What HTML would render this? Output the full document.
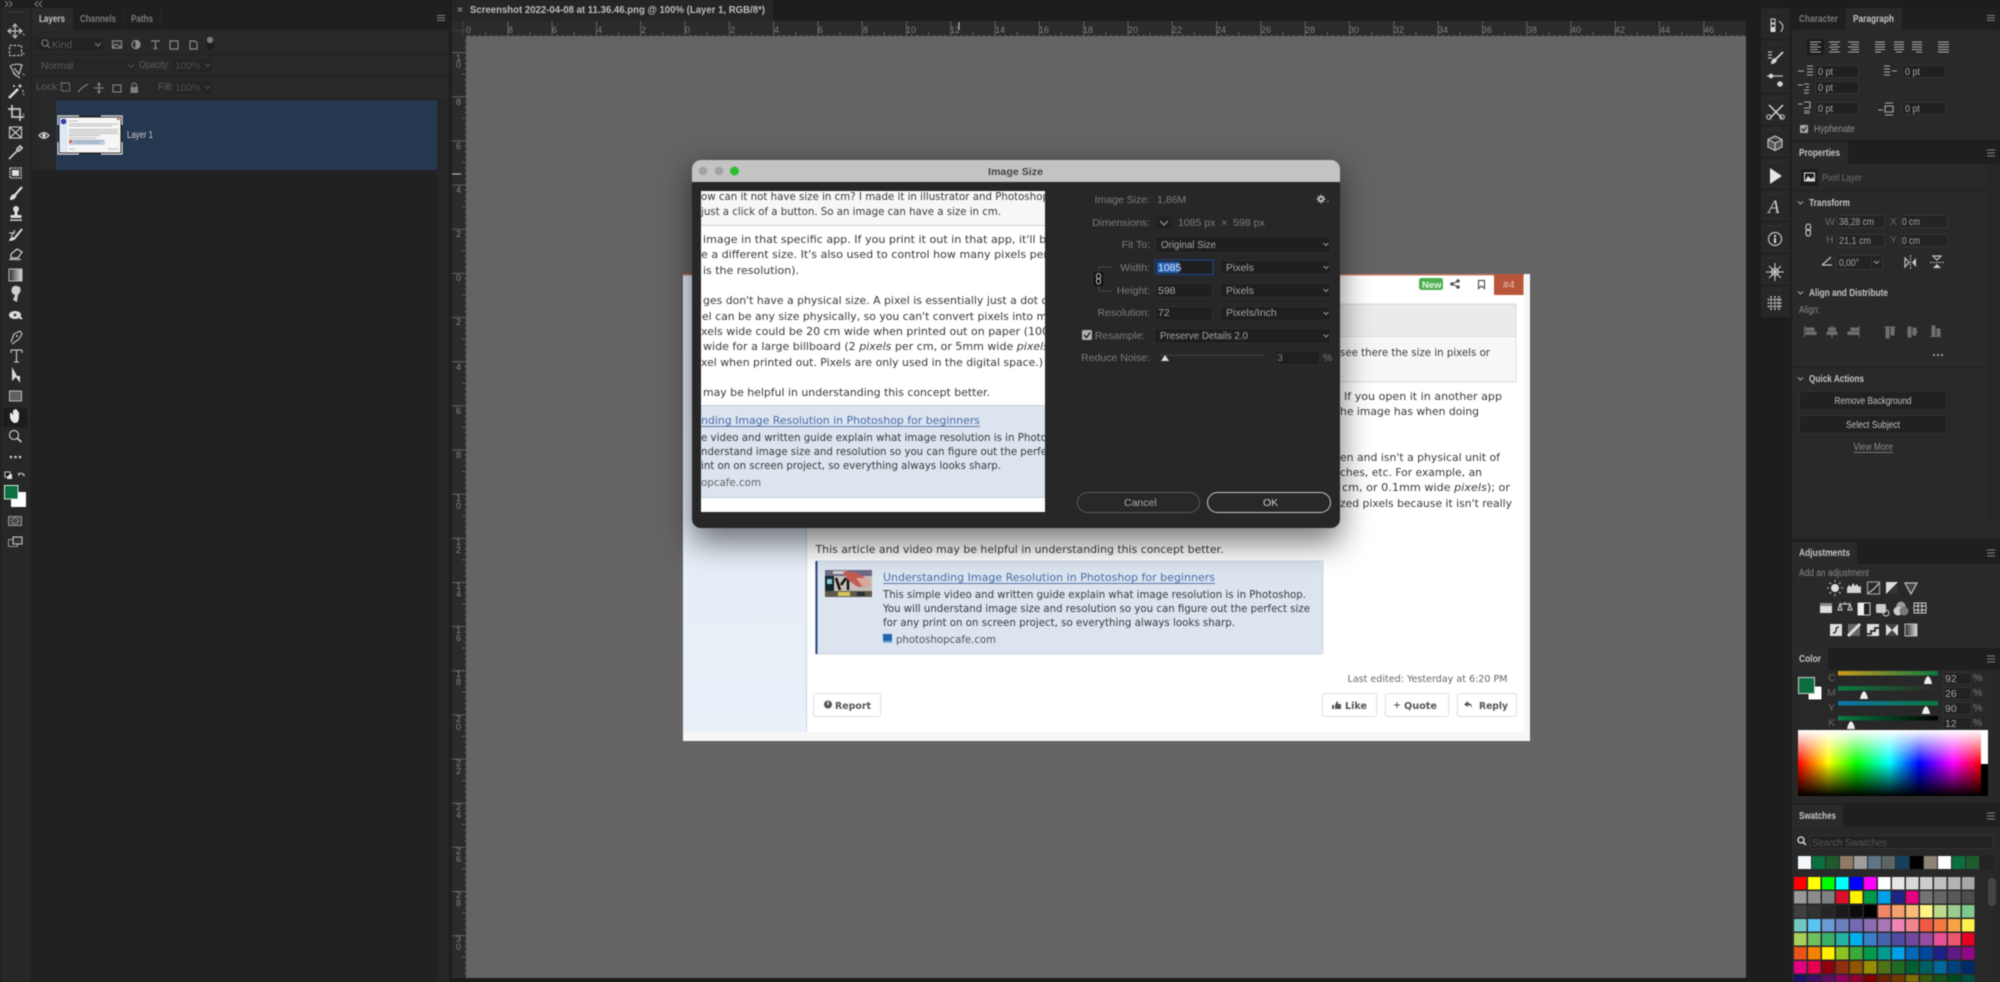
<!DOCTYPE html>
<html><head><meta charset="utf-8"><title>Image Size</title>
<style>
html,body{margin:0;padding:0;background:#1e1e1e;width:2000px;height:982px;overflow:hidden}
svg{display:block;filter:blur(.45px)}
text{font-family:"Liberation Sans",sans-serif;font-size:10px;fill:#9a9a9a;white-space:pre}
.b{font-weight:bold;fill:#c4c4c4}
.t{font-weight:bold;fill:#7a7a7a}
.dim{fill:#5c5c5c}
.v{fill:#a4a4a4;font-size:10.5px}
.l{fill:#7c7c7c;font-size:10.5px}
.d{font-family:"DejaVu Sans",sans-serif;font-size:11px;fill:#3a3a3a}
.dq{font-family:"DejaVu Sans",sans-serif;font-size:10.5px;fill:#3a3a3a}
.r{fill:#808080;font-size:9px;font-family:"Liberation Sans",sans-serif}
.i{fill:none;stroke:#c0c0c0;stroke-width:1.2}
.a{fill:none;stroke:#777;stroke-width:1.2}
</style></head><body>
<svg width="2000" height="982" viewBox="0 0 2000 982" xmlns="http://www.w3.org/2000/svg">
<defs>
<pattern id="hr" x="463" y="21" width="44.3" height="15" patternUnits="userSpaceOnUse"><path d="M.5 0V15M22.6 11V15M5.5 13.500V15M11 13.500V15M16.6 13.500V15M28 13.500V15M33.5 13.500V15M39 13.500V15" stroke="#626262" stroke-width="1" fill="none"/></pattern>
<pattern id="vr" x="452" y="8" width="14" height="44.15" patternUnits="userSpaceOnUse"><path d="M0 .5H14M10 22H14M12.500 5.5H14M12.500 11H14M12.500 16.5H14M12.500 27.5H14M12.500 33H14M12.500 38.5H14" stroke="#626262" stroke-width="1" fill="none"/></pattern>
<linearGradient id="rb"><stop offset="0" stop-color="#f00"/><stop offset=".165" stop-color="#ff0"/><stop offset=".32" stop-color="#0f0"/><stop offset=".5" stop-color="#0ff"/><stop offset=".665" stop-color="#00f"/><stop offset=".85" stop-color="#f0f"/><stop offset="1" stop-color="#f00"/></linearGradient>
<linearGradient id="wb" x2="0" y2="1"><stop offset="0" stop-color="#fff"/><stop offset=".5" stop-color="#fff" stop-opacity="0"/><stop offset=".5" stop-color="#000" stop-opacity="0"/><stop offset="1" stop-color="#000"/></linearGradient>
<linearGradient id="sc"><stop offset="0" stop-color="#cc9a1e"/><stop offset="1" stop-color="#0a7a40"/></linearGradient>
<linearGradient id="sm"><stop offset="0" stop-color="#0a7d40"/><stop offset="1" stop-color="#2e2626"/></linearGradient>
<linearGradient id="sy"><stop offset="0" stop-color="#0c74b0"/><stop offset="1" stop-color="#0b7a3c"/></linearGradient>
<linearGradient id="sk"><stop offset="0" stop-color="#0a7d40"/><stop offset="1" stop-color="#000"/></linearGradient>
<linearGradient id="gr"><stop offset="0" stop-color="#2a2a2a"/><stop offset="1" stop-color="#ddd"/></linearGradient>
<linearGradient id="side" x2="0" y2="1"><stop offset="0" stop-color="#e2ebf6"/><stop offset="1" stop-color="#e9f0f8"/></linearGradient>
<filter id="sh" x="-20%" y="-20%" width="140%" height="150%"><feGaussianBlur stdDeviation="16"/></filter>
<clipPath id="pv"><rect x="701" y="191" width="344" height="321"/></clipPath>
<clipPath id="dlg"><rect x="692" y="160" width="648" height="368" rx="9"/></clipPath>
</defs>

<rect width="2000" height="982" fill="#1e1e1e"/>
<!-- left toolbar -->
<rect x="1" y="8" width="30" height="974" fill="#272727"/>
<path d="M5 1L8 4L5 7M9 1L12 4L9 7M42 1L39 4L42 7M38 1L35 4L38 7M1785 1L1782 4L1785 7M1781 1L1778 4L1781 7M1988 1L1991 4L1988 7M1992 1L1995 4L1992 7" class="a"/>
<path d="M8 12H24" stroke="#4a4a4a" stroke-dasharray="1 1"/>

<!-- layers panel -->
<rect x="32" y="8" width="417" height="22" fill="#1f1f1f"/>
<rect x="32" y="8" width="41" height="22" fill="#2a2a2a"/>
<path d="M123.500 8V30M160.500 8V30" stroke="#262626"/>
<text x="39" y="22" class="b" textLength="26" lengthAdjust="spacingAndGlyphs">Layers</text>
<text x="80" y="22" class="t" textLength="36" lengthAdjust="spacingAndGlyphs">Channels</text>
<text x="131" y="22" class="t" textLength="22" lengthAdjust="spacingAndGlyphs">Paths</text>
<path d="M437 15.500H445M437 18H445M437 20.500H445" stroke="#808080"/>
<rect x="32" y="30" width="417" height="69" fill="#282828"/>
<path d="M32 54.500H449M32 76.500H449" stroke="#222"/>
<rect x="35" y="38" width="68" height="12" fill="#222"/>
<circle cx="45" cy="43" r="3.200" class="a"/><path d="M47.500 45.500L50 48" class="a"/>
<text x="52" y="48" class="dim" style="font-size:10px">Kind</text>
<path d="M95 43L98 46L101 43" class="a"/>
<g stroke="#8b8b8b" fill="none" stroke-width="1.200">
<rect x="112.500" y="41" width="9" height="7"/><path d="M113 47L116 44L121 47"/>
<circle cx="136" cy="44.500" r="4"/><path d="M136 40.500A4 4 0 0 1 136 48.500Z" fill="#8b8b8b"/>
<path d="M151 41H160M155.500 41V48.500M153.500 48.500H157.500"/>
<rect x="170" y="41" width="8" height="8"/>
<path d="M190 41H195L197 43V49H190Z"/>
</g>
<rect x="206" y="38" width="8" height="12" rx="4" fill="#1d1d1d"/><circle cx="210" cy="40" r="3.200" fill="#7a7a7a"/>
<rect x="35" y="59" width="101" height="13" fill="#262626"/>
<text x="41" y="69" class="dim">Normal</text>
<path d="M128 64.500L131 67.500L134 64.500" stroke="#555" fill="none"/>
<text x="139" y="68" class="dim" textLength="31" lengthAdjust="spacingAndGlyphs">Opacity:</text>
<rect x="173" y="59" width="39" height="13" fill="#242424"/><text x="175" y="69" style="fill:#4c4c4c">100%</text>
<path d="M205 64L207.500 66.500L210 64" stroke="#555" fill="none"/>
<text x="36" y="90" class="dim">Lock:</text>
<g stroke="#7f7f7f" fill="none" stroke-width="1.200">
<rect x="61.500" y="83" width="8" height="8" stroke-dasharray="2 1"/>
<path d="M78 92L83 87L88 84"/>
<path d="M99 83V93M94 88H104M97.500 85L99 83L100.500 85M97.500 91L99 93L100.500 91"/>
<rect x="113" y="85" width="8" height="7"/>
</g>
<rect x="130.500" y="87" width="7.500" height="6" fill="#7f7f7f"/><path d="M132 87V85A2.300 2.300 0 0 1 136.500 85V87" stroke="#7f7f7f" fill="none"/>
<text x="158" y="90" class="dim">Fill:</text>
<rect x="173" y="81" width="39" height="13" fill="#242424"/><text x="175" y="91" style="fill:#4c4c4c">100%</text>
<path d="M205 86L207.500 88.500L210 86" stroke="#555" fill="none"/>
<rect x="32" y="99" width="24" height="71" fill="#282828"/>
<rect x="56" y="100" width="381" height="70" fill="#25384f"/>
<rect x="32" y="170" width="405" height="812" fill="#212121"/>
<rect x="437" y="99" width="12" height="883" fill="#262626"/>
<path d="M39 135.500Q44 130 49 135.500Q44 141 39 135.500Z" fill="none" stroke="#ddd" stroke-width="1.200"/><circle cx="44" cy="135.500" r="1.800" fill="#ddd"/>
<rect x="58" y="116" width="64" height="38" fill="#1f1f1f"/>
<rect x="59.500" y="117.500" width="61" height="35" fill="#f6f6f6"/>
<rect x="59.500" y="117.500" width="8" height="35" fill="#dfe8f3"/><circle cx="63.500" cy="121.500" r="2.800" fill="#2e3fa8"/>
<path d="M69 121H78M69 124H118M69 126H112M69 129.500H118M69 131.500H118M69 133.500H118M69 135.500H100M69 138H96" stroke="#a8a8a8" stroke-width=".8"/>
<rect x="69" y="139.500" width="36" height="5.500" fill="#c3d2e4"/><rect x="69" y="140" width="3" height="3" fill="#d9654b"/><path d="M73 141H103M73 143H100" stroke="#8797ac" stroke-width=".7"/>
<rect x="117" y="118" width="2.500" height="2" fill="#c9583a"/>
<path d="M69 149H75M108 149H118" stroke="#aaa" stroke-width=".8"/>
<path d="M58 125V116H79M101 116H122V125M122 142V154H101M79 154H58V142" fill="none" stroke="#e8e8e8" stroke-width="1.200"/>
<text x="127" y="138" style="fill:#cccccc;font-size:10px" textLength="26" lengthAdjust="spacingAndGlyphs">Layer 1</text>

<!-- doc tab strip + rulers -->
<rect x="450" y="0" width="1296" height="21" fill="#1c1c1c"/>
<rect x="452" y="0" width="321" height="21" fill="#262626"/>
<path d="M458 7.500L462 11.500M462 7.500L458 11.500" stroke="#888" stroke-width="1.200"/>
<text x="470" y="13" textLength="295" lengthAdjust="spacingAndGlyphs" style="font-weight:bold;fill:#bdbdbd;font-size:10px">Screenshot 2022-04-08 at 11.36.46.png @ 100% (Layer 1, RGB/8*)</text>
<rect x="452" y="21" width="1294" height="15" fill="#2b2b2b"/>
<rect x="466" y="21" width="1280" height="15" fill="url(#hr)"/>
<rect x="452" y="36" width="14" height="942" fill="#2b2b2b"/>
<rect x="452" y="36" width="14" height="942" fill="url(#vr)"/>
<path d="M452 30.500H466M463 21V36" stroke="#555" stroke-dasharray="1 1"/>
<g>
<text x="466" y="33" class="r">0</text><text x="508" y="33" class="r">8</text><text x="552" y="33" class="r">6</text><text x="597" y="33" class="r">4</text><text x="641" y="33" class="r">2</text><text x="685" y="33" class="r">0</text><text x="730" y="33" class="r">2</text><text x="774" y="33" class="r">4</text><text x="818" y="33" class="r">6</text><text x="863" y="33" class="r">8</text><text x="906" y="33" class="r">10</text><text x="950" y="33" class="r">12</text><text x="995" y="33" class="r">14</text><text x="1039" y="33" class="r">16</text><text x="1083" y="33" class="r">18</text><text x="1128" y="33" class="r">20</text><text x="1172" y="33" class="r">22</text><text x="1216" y="33" class="r">24</text><text x="1261" y="33" class="r">26</text><text x="1305" y="33" class="r">28</text><text x="1349" y="33" class="r">30</text><text x="1394" y="33" class="r">32</text><text x="1438" y="33" class="r">34</text><text x="1482" y="33" class="r">36</text><text x="1527" y="33" class="r">38</text><text x="1571" y="33" class="r">40</text><text x="1615" y="33" class="r">42</text><text x="1660" y="33" class="r">44</text><text x="1704" y="33" class="r">46</text>
<text x="456" y="61" class="r">1</text><text x="456" y="68" class="r">0</text>
<text x="456" y="105" class="r">8</text><text x="456" y="149" class="r">6</text><text x="456" y="193" class="r">4</text><text x="456" y="237" class="r">2</text><text x="456" y="281" class="r">0</text><text x="456" y="325" class="r">2</text><text x="456" y="370" class="r">4</text><text x="456" y="414" class="r">6</text><text x="456" y="458" class="r">8</text>
<text x="456" y="501" class="r">1</text><text x="456" y="509" class="r">0</text><text x="456" y="545" class="r">1</text><text x="456" y="553" class="r">2</text><text x="456" y="589" class="r">1</text><text x="456" y="597" class="r">4</text><text x="456" y="633" class="r">1</text><text x="456" y="641" class="r">6</text><text x="456" y="677" class="r">1</text><text x="456" y="685" class="r">8</text><text x="456" y="722" class="r">2</text><text x="456" y="730" class="r">0</text><text x="456" y="766" class="r">2</text><text x="456" y="774" class="r">2</text><text x="456" y="810" class="r">2</text><text x="456" y="818" class="r">4</text><text x="456" y="854" class="r">2</text><text x="456" y="862" class="r">6</text><text x="456" y="898" class="r">2</text><text x="456" y="906" class="r">8</text><text x="456" y="942" class="r">3</text><text x="456" y="950" class="r">0</text>
</g>
<path d="M959 22V30M452 174H461" stroke="#ccc" stroke-width="1"/>

<!-- canvas -->
<rect x="466" y="36" width="1280" height="942" fill="#646464"/>
<rect x="450" y="978" width="1296" height="4" fill="#1a1a1a"/>

<!-- document page -->
<rect x="683" y="274" width="847" height="467" fill="#f6f6f6"/>
<rect x="684" y="275" width="840" height="457" fill="#fff"/>
<rect x="684" y="275" width="122" height="457" fill="url(#side)"/>
<rect x="806" y="275" width="1" height="457" fill="#c5d6e9"/>
<rect x="683" y="274" width="841" height="1.500" fill="#cf7a5c"/>
<rect x="1419" y="278" width="24" height="12" rx="2.500" fill="#4caf50"/>
<text x="1422" y="288" style="fill:#e9f6e9;font-size:9.5px;font-weight:bold">New</text>
<g fill="#555" stroke="#555"><circle cx="1452" cy="284" r="1.300"/><circle cx="1458" cy="281" r="1.300"/><circle cx="1458" cy="287" r="1.300"/><path d="M1458 281L1452 284L1458 287" fill="none"/></g>
<path d="M1478.500 280.500H1484.500V288.500L1481.500 286L1478.500 288.500Z" fill="none" stroke="#555" stroke-width="1.200"/>
<rect x="1494" y="274" width="29.500" height="21" fill="#b9563a"/>
<text x="1503" y="288" style="fill:#e8c0b2;font-size:10.5px;font-weight:normal">#4</text>
<rect x="815" y="304" width="701" height="78" fill="#f7f7f7" stroke="#dedede"/>
<rect x="815" y="304.500" width="701" height="32" fill="#ebebeb" stroke="#dcdcdc"/>
<text x="1340" y="356" class="dq" textLength="150" lengthAdjust="spacingAndGlyphs">see there the size in pixels or</text>
<text x="1344" y="400" class="d" textLength="158" lengthAdjust="spacingAndGlyphs">If you open it in another app</text>
<text x="1340" y="415" class="d" textLength="139" lengthAdjust="spacingAndGlyphs">he image has when doing</text>
<text x="1340" y="461" class="d" textLength="160" lengthAdjust="spacingAndGlyphs">en and isn't a physical unit of</text>
<text x="1340" y="476" class="d" textLength="142" lengthAdjust="spacingAndGlyphs">ches, etc. For example, an</text>
<text x="1342" y="491" class="d" textLength="168" lengthAdjust="spacingAndGlyphs">cm, or 0.1mm wide <tspan font-style="italic">pixels</tspan>); or</text>
<text x="1340" y="507" class="d" textLength="172" lengthAdjust="spacingAndGlyphs">zed pixels because it isn't really</text>
<text x="815.500" y="553" class="d" textLength="408" lengthAdjust="spacingAndGlyphs">This article and video may be helpful in understanding this concept better.</text>
<rect x="815.500" y="561" width="507.500" height="93" rx="1.500" fill="#dbe4ef" stroke="#cfd9e6"/>
<rect x="815.500" y="561" width="2" height="93" fill="#2a4a86"/>
<!-- embed thumbnail -->
<rect x="825" y="570" width="47" height="27" fill="#c4bdb6"/>
<rect x="825" y="570" width="47" height="6" fill="#6f6a86"/><rect x="833" y="571" width="14" height="3" fill="#d8d2cc"/>
<rect x="825" y="576" width="9" height="15" fill="#0f2a33"/><rect x="827" y="579" width="5" height="5" fill="#8fc6d8"/>
<path d="M836 578L840 590M846 578L841 585M848 578V590" stroke="#111" stroke-width="2.500" fill="none"/>
<path d="M843 572Q853 570 864 577L868 586L858 587L848 580Z" fill="#c45a54"/><path d="M856 578L869 578L872 586L862 586Z" fill="#d9a89c"/>
<rect x="825" y="591" width="47" height="6" fill="#5e5b4c"/><rect x="838" y="592" width="12" height="4" fill="#d9c65c"/><rect x="857" y="592" width="8" height="4" fill="#2c2c30"/>
<text x="883" y="581" class="d" style="fill:#4a6ca8" textLength="332" lengthAdjust="spacingAndGlyphs">Understanding Image Resolution in Photoshop for beginners</text>
<rect x="883" y="583" width="332" height=".9" fill="#4a6ca8"/>
<text x="883" y="598" class="dq" textLength="423" lengthAdjust="spacingAndGlyphs">This simple video and written guide explain what image resolution is in Photoshop.</text>
<text x="883" y="612" class="dq" textLength="427" lengthAdjust="spacingAndGlyphs">You will understand image size and resolution so you can figure out the perfect size</text>
<text x="883" y="626" class="dq" textLength="352" lengthAdjust="spacingAndGlyphs">for any print on on screen project, so everything always looks sharp.</text>
<rect x="883" y="634" width="9" height="9" fill="#2266b0"/><rect x="883" y="641" width="9" height="2" fill="#7fb0dc"/>
<text x="896" y="643" class="dq" style="fill:#555" textLength="100" lengthAdjust="spacingAndGlyphs">photoshopcafe.com</text>
<text x="1347.500" y="682" class="dq" style="fill:#666;font-size:10px" textLength="160" lengthAdjust="spacingAndGlyphs">Last edited: Yesterday at 6:20 PM</text>
<g fill="#fff" stroke="#d7e0ec"><rect x="813.500" y="693.500" width="67" height="23" rx="2"/><rect x="1322.500" y="693.500" width="54" height="23" rx="2"/><rect x="1385.500" y="693.500" width="63" height="23" rx="2"/><rect x="1457.500" y="693.500" width="59" height="23" rx="2"/></g>
<circle cx="828" cy="704.500" r="4" fill="#555"/><rect x="827.400" y="701.500" width="1.200" height="3.500" fill="#fff"/>
<text x="835" y="709" style="font-size:10px;font-weight:bold;fill:#555;font-family:'DejaVu Sans',sans-serif" textLength="36" lengthAdjust="spacingAndGlyphs">Report</text>
<path d="M1332 705H1334V709H1332ZM1335 705L1337 701L1338 702V704H1341V709H1335Z" fill="#555"/>
<text x="1345" y="709" style="font-size:10px;font-weight:bold;fill:#555;font-family:'DejaVu Sans',sans-serif" textLength="22" lengthAdjust="spacingAndGlyphs">Like</text>
<path d="M1397 702V708M1394 705H1400" stroke="#555"/>
<text x="1404" y="709" style="font-size:10px;font-weight:bold;fill:#555;font-family:'DejaVu Sans',sans-serif" textLength="33" lengthAdjust="spacingAndGlyphs">Quote</text>
<path d="M1468 701L1464 704.500L1468 707V705Q1471 705 1472 708Q1472 703 1468 703Z" fill="#555"/>
<text x="1479" y="709" style="font-size:10px;font-weight:bold;fill:#555;font-family:'DejaVu Sans',sans-serif" textLength="29" lengthAdjust="spacingAndGlyphs">Reply</text>

<!-- dialog shadow -->
<rect x="692" y="170" width="648" height="372" fill="#000" opacity=".55" filter="url(#sh)"/>
<!-- dialog -->
<g clip-path="url(#dlg)">
<rect x="692" y="160" width="648" height="368" fill="#272727"/>
<rect x="692" y="160" width="648" height="22" fill="#c3c3c3"/>
</g>
<circle cx="703" cy="171" r="4.300" fill="#a2a2a2"/><circle cx="719" cy="171" r="4.300" fill="#a2a2a2"/><circle cx="734.500" cy="171" r="4.500" fill="#2ac032"/>
<text x="988" y="175" style="font-weight:bold;fill:#444;font-size:10.5px" textLength="55" lengthAdjust="spacingAndGlyphs">Image Size</text>

<!-- preview -->
<rect x="701" y="191" width="344" height="321" fill="#fff"/>
<g clip-path="url(#pv)">
<rect x="701" y="191" width="344" height="34" fill="#f7f7f7"/><rect x="701" y="225" width="344" height="1" fill="#cfcfcf"/>
<text x="701" y="200" class="dq" textLength="348" lengthAdjust="spacingAndGlyphs">ow can it not have size in cm? I made it in illustrator and Photoshop</text>
<text x="701" y="215" class="dq" textLength="300" lengthAdjust="spacingAndGlyphs">just a click of a button. So an image can have a size in cm.</text>
<text x="703" y="243" class="d" textLength="350" lengthAdjust="spacingAndGlyphs">image in that specific app. If you print it out in that app, it'll be</text>
<text x="701" y="258" class="d" textLength="347" lengthAdjust="spacingAndGlyphs">e a different size. It's also used to control how many pixels per</text>
<text x="703" y="274" class="d" textLength="96" lengthAdjust="spacingAndGlyphs">is the resolution).</text>
<text x="703" y="304" class="d" textLength="349" lengthAdjust="spacingAndGlyphs">ges don't have a physical size. A pixel is essentially just a dot of</text>
<text x="702" y="320" class="d" textLength="345" lengthAdjust="spacingAndGlyphs">el can be any size physically, so you can't convert pixels into m</text>
<text x="701" y="335" class="d" textLength="348" lengthAdjust="spacingAndGlyphs">xels wide could be 20 cm wide when printed out on paper (100</text>
<text x="703" y="350" class="d" textLength="346" lengthAdjust="spacingAndGlyphs">wide for a large billboard (2 <tspan font-style="italic">pixels</tspan> per cm, or 5mm wide <tspan font-style="italic">pixels</tspan></text>
<text x="701" y="366" class="d" textLength="342" lengthAdjust="spacingAndGlyphs">xel when printed out. Pixels are only used in the digital space.)</text>
<text x="703" y="396" class="d" textLength="287" lengthAdjust="spacingAndGlyphs">may be helpful in understanding this concept better.</text>
<rect x="701" y="405" width="344" height="92" fill="#dbe4ef"/><rect x="701" y="405" width="344" height="1" fill="#c4ccd6"/><rect x="701" y="497" width="344" height="1" fill="#c4ccd6"/>
<text x="701" y="424" class="d" style="fill:#4a6ca8" textLength="279" lengthAdjust="spacingAndGlyphs">nding Image Resolution in Photoshop for beginners</text>
<rect x="701" y="426" width="279" height=".9" fill="#4a6ca8"/>
<text x="701" y="441" class="dq" textLength="346" lengthAdjust="spacingAndGlyphs">e video and written guide explain what image resolution is in Photo</text>
<text x="701" y="455" class="dq" textLength="346" lengthAdjust="spacingAndGlyphs">nderstand image size and resolution so you can figure out the perfe</text>
<text x="701" y="469" class="dq" textLength="300" lengthAdjust="spacingAndGlyphs">int on on screen project, so everything always looks sharp.</text>
<text x="701" y="486" class="dq" style="fill:#666" textLength="60" lengthAdjust="spacingAndGlyphs">opcafe.com</text>
</g>

<!-- dialog controls -->
<text x="1150" y="203" text-anchor="end" class="l">Image Size:</text>
<text x="1157" y="203" class="l">1,86M</text>
<circle cx="1321" cy="199" r="3.200" fill="#b5b5b5"/><circle cx="1321" cy="199" r="1.200" fill="#272727"/><path d="M1321 194.500V196M1321 202V203.500M1316.500 199H1318M1324 199H1325.500M1318 196L1319 197M1323 201L1324 202M1324 196L1323 197M1319 201L1318 202" stroke="#b5b5b5" stroke-width="1.200"/><circle cx="1328" cy="201.500" r=".8" fill="#999"/>
<text x="1150" y="226" text-anchor="end" class="l">Dimensions:</text>
<rect x="1157" y="216" width="14" height="13" fill="#202020"/><path d="M1160 221L1164 225L1168 221" stroke="#aaa" fill="none"/>
<text x="1178" y="226" class="l">1085 px  ×  598 px</text>
<text x="1150" y="248" text-anchor="end" class="l">Fit To:</text>
<text x="1150" y="271" text-anchor="end" class="l">Width:</text>
<text x="1150" y="294" text-anchor="end" class="l">Height:</text>
<text x="1150" y="316" text-anchor="end" class="l">Resolution:</text>
<text x="1145" y="339" text-anchor="end" class="l">Resample:</text>
<text x="1150" y="361" text-anchor="end" class="l">Reduce Noise:</text>
<g fill="#1f1f1f" stroke="#2d2d2d">
<rect x="1155.500" y="236.500" width="175" height="16"/>
<rect x="1155.500" y="283.500" width="57" height="14"/>
<rect x="1155.500" y="306.500" width="57" height="14"/>
<rect x="1220.500" y="260.500" width="110" height="14"/>
<rect x="1220.500" y="283.500" width="110" height="14"/>
<rect x="1220.500" y="306.500" width="110" height="14"/>
<rect x="1154.500" y="328.500" width="176" height="15"/>
<rect x="1275.500" y="351.500" width="44" height="13"/>
</g>
<rect x="1155" y="260" width="58" height="14.500" fill="#1f1f1f" stroke="#1d4a96" stroke-width="1"/>
<rect x="1157" y="262" width="22" height="11" fill="#2562b5"/>
<text x="1161" y="248" class="v" textLength="55" lengthAdjust="spacingAndGlyphs">Original Size</text>
<text x="1158" y="271" style="fill:#dde6f4;font-size:10.500px">1085</text>
<text x="1226" y="271" class="v">Pixels</text>
<text x="1158" y="294" class="v">598</text>
<text x="1226" y="294" class="v">Pixels</text>
<text x="1158" y="316" class="v">72</text>
<text x="1226" y="316" class="v">Pixels/Inch</text>
<text x="1160" y="339" class="v" textLength="88" lengthAdjust="spacingAndGlyphs">Preserve Details 2.0</text>
<text x="1277" y="361" class="l">3</text>
<text x="1323" y="361" class="l">%</text>
<path d="M1323.500 243L1326 245.500L1328.500 243M1323.500 266L1326 268.500L1328.500 266M1323.500 289L1326 291.500L1328.500 289M1323.500 312L1326 314.500L1328.500 312M1323.500 334.500L1326 337L1328.500 334.500" stroke="#999" fill="none"/>
<path d="M1111 267H1099V270M1111 291H1099V285" stroke="#484848" fill="none"/>
<rect x="1094" y="272" width="9" height="14" rx="1" fill="#111"/>
<rect x="1096.500" y="273.500" width="4" height="5.500" rx="2" fill="none" stroke="#bbb"/><rect x="1096.500" y="278.500" width="4" height="5.500" rx="2" fill="none" stroke="#bbb"/>
<rect x="1082" y="330" width="10" height="10" rx="1.500" fill="#b0b0b0"/><path d="M1084 335L1086.500 337.500L1090 332.500" stroke="#272727" stroke-width="1.500" fill="none"/>
<rect x="1160" y="354.500" width="105" height="1.500" fill="#3b3b3b"/>
<path d="M1161 361L1165 355L1169 361Z" fill="#ddd"/>
<rect x="1077.500" y="492.500" width="122" height="20" rx="10" fill="#282828" stroke="#5a5a5a"/>
<text x="1124" y="506" style="fill:#aaa;font-size:10.500px">Cancel</text>
<rect x="1207.500" y="492.500" width="123" height="20" rx="10" fill="#282828" stroke="#c6c6c6"/>
<text x="1263" y="506" style="fill:#ccc;font-size:10.500px">OK</text>

<!-- right dock -->
<rect x="1746" y="0" width="254" height="982" fill="#1d1d1d"/>
<g fill="#272727">
<rect x="1761" y="8" width="29" height="31"/><rect x="1761" y="40" width="29" height="53"/><rect x="1761" y="94" width="29" height="31"/><rect x="1761" y="126" width="29" height="31"/><rect x="1761" y="158" width="29" height="31"/><rect x="1761" y="190" width="29" height="31"/><rect x="1761" y="222" width="29" height="31"/><rect x="1761" y="254" width="29" height="31"/><rect x="1761" y="286" width="29" height="31"/>
</g>
<path d="M1768 12H1782M1768 44H1782M1768 98H1782M1768 130H1782M1768 162H1782M1768 194H1782M1768 226H1782M1768 258H1782M1768 290H1782" stroke="#3a3a3a" stroke-dasharray="1 1"/>
<g>
<rect x="1771" y="19" width="4" height="4" class="i"/><rect x="1771" y="24" width="4" height="3.500" class="i"/><rect x="1770.500" y="28" width="5" height="4" fill="#ddd"/><path d="M1779 21L1782 24Q1784 27 1781 32" class="i"/>
<path d="M1768 52H1772M1768 55H1772M1768 58H1772" class="i"/><path d="M1783 52L1776 59" stroke="#d4d4d4" stroke-width="1.800"/><path d="M1771 64Q1771 59 1775 58L1777 60Q1776 64 1771 64Z" fill="#d4d4d4"/>
<path d="M1767 76H1783M1777 84H1783" class="i"/><circle cx="1771" cy="76" r="2.300" fill="#d4d4d4"/><circle cx="1780" cy="84" r="2.700" fill="#d4d4d4"/>
<path d="M1769 105L1782 118M1783 105L1770 118" stroke="#d4d4d4" stroke-width="1.500"/><circle cx="1769" cy="117" r="2.200" class="i"/><circle cx="1782" cy="117" r="2.200" class="i"/>
<path d="M1775 136L1782 139.500V147L1775 150.500L1768 147V139.500Z M1768 139.500L1775 143L1782 139.500M1775 143V150.500" style="fill:#555;stroke:#c0c0c0;stroke-width:1.200"/>
<path d="M1770 168L1782 176L1770 184Z" fill="#e4e4e4"/>
<text x="1768" y="213" style="font-family:'Liberation Serif',serif;font-style:italic;font-size:19px;fill:#cccccc">A</text>
<circle cx="1775" cy="239" r="6.500" class="i"/><rect x="1774" y="238" width="2" height="5" fill="#ddd"/><rect x="1774" y="235" width="2" height="2" fill="#ddd"/>
<path d="M1775 263V281M1766 272H1784M1769 266L1781 278M1781 266L1769 278" stroke="#ccc" stroke-width="1"/><circle cx="1775" cy="272" r="3.500" class="i"/>
<path d="M1771 296V310M1775 296V310M1779 296V310M1767.500 299.500H1782.500M1767.500 303H1782.500M1767.500 306.500H1782.500" stroke="#bbb" stroke-width="1.600" stroke-dasharray="2 1"/>
</g>

<!-- right panels: paragraph -->
<rect x="1792" y="8" width="208" height="22" fill="#1f1f1f"/>
<rect x="1846" y="8" width="56" height="22" fill="#2a2a2a"/>
<text x="1799" y="22" class="t" textLength="39" lengthAdjust="spacingAndGlyphs">Character</text>
<text x="1853" y="22" class="b" textLength="41" lengthAdjust="spacingAndGlyphs">Paragraph</text>
<path d="M1987 15.500H1995M1987 18H1995M1987 20.500H1995" stroke="#808080"/>
<rect x="1792" y="30" width="208" height="110" fill="#292929"/>
<rect x="1807" y="39" width="17" height="16" fill="#1c1c1c"/>
<g stroke="#aaa" stroke-width="1.100" fill="none">
<path d="M1810 42H1821M1810 44.500H1818M1810 47H1821M1810 49.500H1818M1810 52H1821"/>
<path d="M1829 42H1840M1831 44.500H1838M1829 47H1840M1831 49.500H1838M1829 52H1840"/>
<path d="M1848 42H1859M1851 44.500H1859M1848 47H1859M1851 49.500H1859M1848 52H1859"/>
<path d="M1875 42H1885M1875 44.500H1885M1875 47H1885M1875 49.500H1885M1875 52H1881"/>
<path d="M1894 42H1904M1894 44.500H1904M1894 47H1904M1894 49.500H1904M1896 52H1902"/>
<path d="M1912 42H1922M1912 44.500H1922M1912 47H1922M1912 49.500H1922M1916 52H1922"/>
<path d="M1938 42H1949M1938 44.500H1949M1938 47H1949M1938 49.500H1949M1938 52H1949"/>
<path d="M1798 71H1804M1807 66H1813M1807 69H1813M1807 72H1813M1807 75H1813M1884 66H1890M1884 69H1890M1884 72H1890M1884 75H1890M1892 71H1897M1798 85H1803M1804 84H1809M1806 87H1809M1804 90H1809M1804 93H1809M1798 104H1803M1804 102H1810V108H1804M1804 111H1810M1804 113H1810M1885 106H1893V112H1885ZM1885 103H1893M1885 115H1893M1878 110H1883"/>
</g>
<g fill="#202020" stroke="#333"><rect x="1815.500" y="65.500" width="43" height="12"/><rect x="1902.500" y="65.500" width="43" height="12"/><rect x="1815.500" y="81.500" width="43" height="12"/><rect x="1815.500" y="102.500" width="43" height="12"/><rect x="1902.500" y="102.500" width="43" height="12"/></g>
<text x="1818" y="75" class="v" textLength="15" lengthAdjust="spacingAndGlyphs">0 pt</text><text x="1905" y="75" class="v" textLength="15" lengthAdjust="spacingAndGlyphs">0 pt</text><text x="1818" y="91" class="v" textLength="15" lengthAdjust="spacingAndGlyphs">0 pt</text><text x="1818" y="112" class="v" textLength="15" lengthAdjust="spacingAndGlyphs">0 pt</text><text x="1905" y="112" class="v" textLength="15" lengthAdjust="spacingAndGlyphs">0 pt</text>
<rect x="1800" y="125" width="8" height="8" rx="1" fill="#aaa"/><path d="M1801.500 128.500L1803.500 131L1806.500 127" stroke="#222" stroke-width="1.300" fill="none"/>
<text x="1814" y="132" class="v" style="fill:#959595" textLength="41" lengthAdjust="spacingAndGlyphs">Hyphenate</text>

<!-- properties -->
<rect x="1792" y="142" width="208" height="22" fill="#1f1f1f"/>
<rect x="1792" y="142" width="56" height="22" fill="#2a2a2a"/>
<text x="1799" y="156" class="b" textLength="41" lengthAdjust="spacingAndGlyphs">Properties</text>
<path d="M1987 150H1995M1987 153H1995M1987 156H1995" stroke="#808080"/>
<rect x="1792" y="164" width="208" height="375" fill="#292929"/>
<rect x="1801" y="169" width="17" height="17" fill="#1c1c1c"/>
<rect x="1804.500" y="173" width="10" height="8" fill="none" stroke="#ddd"/><path d="M1805 181L1808 176L1811 179L1813 177L1814.500 181Z" fill="#ddd"/>
<text x="1822" y="181" style="fill:#6e6e6e;font-size:10px" textLength="40" lengthAdjust="spacingAndGlyphs">Pixel Layer</text>
<path d="M1792 190.500H1987M1792 367.500H1987" stroke="#1f1f1f"/>
<rect x="1987" y="164" width="13" height="356" fill="#262626"/>
<path d="M1798 201.500L1800.500 204L1803 201.500M1798 291.500L1800.500 294L1803 291.500M1798 377.500L1800.500 380L1803 377.500" stroke="#aaa" fill="none"/>
<text x="1809" y="206" class="b" textLength="41" lengthAdjust="spacingAndGlyphs">Transform</text>
<text x="1825" y="225" class="l" style="fill:#666">W</text><text x="1890" y="225" class="l" style="fill:#666">X</text><text x="1826" y="243" class="l" style="fill:#666">H</text><text x="1890" y="243" class="l" style="fill:#666">Y</text>
<g fill="#232323" stroke="#343434"><rect x="1837.500" y="215.500" width="47" height="12"/><rect x="1900.500" y="215.500" width="47" height="12"/><rect x="1837.500" y="234.500" width="47" height="12"/><rect x="1900.500" y="234.500" width="47" height="12"/><rect x="1836.500" y="255.500" width="46" height="14"/></g>
<text x="1839" y="225" class="v" textLength="35" lengthAdjust="spacingAndGlyphs">38,28 cm</text><text x="1902" y="225" class="v" textLength="18" lengthAdjust="spacingAndGlyphs">0 cm</text><text x="1839" y="244" class="v" textLength="32" lengthAdjust="spacingAndGlyphs">21,1 cm</text><text x="1902" y="244" class="v" textLength="18" lengthAdjust="spacingAndGlyphs">0 cm</text><text x="1839" y="266" class="v" textLength="20" lengthAdjust="spacingAndGlyphs">0,00°</text>
<path d="M1871.500 255V270" stroke="#343434"/><path d="M1874 261L1876.500 263.500L1879 261" stroke="#999" fill="none"/>
<rect x="1806" y="224" width="4.500" height="6.500" rx="2.200" class="i"/><rect x="1806" y="229.500" width="4.500" height="6.500" rx="2.200" class="i"/>
<path d="M1822 265H1832M1822 265L1831 257" class="i"/>
<path d="M1910.500 255V270" stroke="#bbb" stroke-dasharray="2 1"/><path d="M1905 258L1909 262.500L1905 267Z" class="i"/><path d="M1916 258L1912 262.500L1916 267Z" fill="#ccc"/>
<path d="M1930 262.500H1944" stroke="#bbb" stroke-dasharray="2 1"/><path d="M1933 256H1941L1937 260Z" class="i"/><path d="M1933 268H1941L1937 264Z" fill="#ccc"/>

<text x="1809" y="296" class="b" textLength="79" lengthAdjust="spacingAndGlyphs">Align and Distribute</text>
<text x="1799" y="313" style="fill:#8a8a8a;font-size:10px" textLength="21" lengthAdjust="spacingAndGlyphs">Align:</text>
<g stroke="#6f6f6f" fill="#6f6f6f" stroke-width="1">
<path d="M1804.500 326V337" fill="none"/><rect x="1806" y="328" width="8" height="2.500"/><rect x="1806" y="332" width="10" height="2.500"/>
<path d="M1832 325V338" fill="none"/><rect x="1828.500" y="328" width="7" height="2.500"/><rect x="1827" y="332" width="10" height="2.500"/>
<path d="M1859 326V337" fill="none"/><rect x="1851" y="328" width="7" height="2.500"/><rect x="1848" y="332" width="10" height="2.500"/>
<path d="M1884 327H1896" fill="none"/><rect x="1886" y="328" width="3" height="10"/><rect x="1891" y="328" width="3" height="7"/>
<path d="M1907 332H1918" fill="none"/><rect x="1908" y="327" width="3" height="10"/><rect x="1913" y="328" width="3" height="7"/>
<path d="M1930 336.500H1941" fill="none"/><rect x="1932" y="326" width="3" height="10"/><rect x="1937" y="329" width="3" height="7"/>
</g>
<circle cx="1934" cy="355" r="1" fill="#bbb"/><circle cx="1938" cy="355" r="1" fill="#bbb"/><circle cx="1942" cy="355" r="1" fill="#bbb"/>
<text x="1809" y="382" class="b" textLength="55" lengthAdjust="spacingAndGlyphs">Quick Actions</text>
<rect x="1799.500" y="391.500" width="147" height="18" fill="#212121" stroke="#2f2f2f"/>
<rect x="1799.500" y="415.500" width="147" height="18" fill="#212121" stroke="#2f2f2f"/>
<text x="1834.500" y="404" style="fill:#c0c0c0;font-size:10px" textLength="77" lengthAdjust="spacingAndGlyphs">Remove Background</text>
<text x="1846" y="428" style="fill:#c0c0c0;font-size:10px" textLength="54" lengthAdjust="spacingAndGlyphs">Select Subject</text>
<text x="1853.500" y="450" style="fill:#8a8a8a;font-size:10px" textLength="39.500" lengthAdjust="spacingAndGlyphs">View More</text>
<rect x="1853.500" y="452" width="39.500" height=".8" fill="#8a8a8a"/>

<!-- adjustments -->
<rect x="1792" y="540" width="208" height="24" fill="#1f1f1f"/>
<rect x="1792" y="542" width="65" height="22" fill="#2a2a2a"/>
<text x="1799" y="556" class="b" textLength="51" lengthAdjust="spacingAndGlyphs">Adjustments</text>
<path d="M1987 550H1995M1987 553H1995M1987 556H1995" stroke="#808080"/>
<rect x="1792" y="564" width="208" height="84" fill="#292929"/>
<text x="1799" y="576" style="fill:#8a8a8a;font-size:10px" textLength="70" lengthAdjust="spacingAndGlyphs">Add an adjustment</text>
<g>
<circle cx="1835" cy="588" r="4" fill="#ddd"/><path d="M1835 580V582M1835 594V596M1827 588H1829M1841 588H1843M1829.500 582.500L1831 584M1839 592L1840.500 593.500M1829.500 593.500L1831 592M1839 584L1840.500 582.500" stroke="#ccc"/>
<path d="M1847 593V588L1849 585L1851 587L1853 583L1855 586L1857 584L1859 587L1861 586V593Z" fill="#d4d4d4"/>
<rect x="1867.500" y="582" width="12" height="12" class="i" style="stroke:#999"/><path d="M1868 593Q1874 590 1879 583" class="i"/>
<rect x="1886" y="582" width="12" height="12" fill="#ddd"/><path d="M1886 594L1898 582V594Z" fill="#333"/>
<path d="M1905 583H1917L1911 594Z" fill="#444" stroke="#bbb" stroke-width="1.300"/>
<rect x="1820" y="603" width="12" height="10" fill="#ddd"/><rect x="1820" y="603" width="12" height="3" fill="#888"/>
<path d="M1845 602V604M1840 604H1850M1840 604L1838 610H1842ZM1850 604L1848 610H1852Z" class="i"/>
<rect x="1858" y="603" width="12" height="12" fill="#222" stroke="#ccc"/><rect x="1858" y="603" width="6" height="12" fill="#eee"/>
<rect x="1876" y="604" width="10" height="9" rx="1.500" fill="#ccc"/><circle cx="1886" cy="613" r="3" fill="none" stroke="#ccc"/>
<circle cx="1901" cy="606" r="4.500" fill="#9a9a9a"/><circle cx="1898" cy="611" r="4.500" fill="#ccc"/><circle cx="1904" cy="611" r="4.500" fill="#777"/>
<rect x="1914" y="603" width="12" height="10" fill="none" stroke="#ccc"/><path d="M1914 606H1926M1914 610H1926M1918 603V613M1922 603V613" stroke="#ccc"/>
<rect x="1830" y="624" width="12" height="12" fill="#ddd"/><path d="M1833 633Q1836 633 1836 630T1839 627" stroke="#222" stroke-width="1.300" fill="none"/>
<rect x="1848" y="624" width="12" height="12" fill="#666"/><path d="M1848 636L1860 624" stroke="#ddd" stroke-width="3"/>
<rect x="1867" y="624" width="12" height="12" fill="#ddd"/><path d="M1867 634H1871V631H1875V628H1879" stroke="#222" stroke-width="1.800" fill="none"/>
<rect x="1886" y="624" width="12" height="12" fill="#ddd"/><path d="M1886 624L1892 630L1898 624ZM1886 636L1892 630L1898 636Z" fill="#444"/>
<rect x="1905" y="624" width="12" height="12" fill="url(#gr)" stroke="#bbb"/>
</g>

<!-- color -->
<rect x="1792" y="648" width="208" height="22" fill="#1f1f1f"/>
<rect x="1792" y="648" width="36" height="22" fill="#2a2a2a"/>
<text x="1799" y="662" class="b" textLength="22" lengthAdjust="spacingAndGlyphs">Color</text>
<path d="M1987 656H1995M1987 659H1995M1987 662H1995" stroke="#808080"/>
<rect x="1792" y="670" width="208" height="133" fill="#282828"/>
<rect x="1808" y="686" width="14" height="14" fill="#fff" stroke="#1f1f1f"/>
<rect x="1798.500" y="677.500" width="16" height="16" fill="#0b6e3e" stroke="#d0d0d0" stroke-width="1"/>
<text x="1828" y="681" class="l" style="fill:#666">C</text><text x="1827" y="696" class="l" style="fill:#666">M</text><text x="1828" y="711" class="l" style="fill:#666">Y</text><text x="1828" y="726" class="l" style="fill:#666">K</text>
<rect x="1838" y="671" width="100" height="4.500" fill="url(#sc)"/>
<rect x="1838" y="686" width="100" height="4.500" fill="url(#sm)"/>
<rect x="1838" y="701" width="100" height="4.500" fill="url(#sy)"/>
<rect x="1838" y="716" width="100" height="4.500" fill="url(#sk)"/>
<path d="M1928 676Q1931 678 1932 684H1924Q1925 678 1928 676ZM1864 691Q1867 693 1868 699H1860Q1861 693 1864 691ZM1926 706Q1929 708 1930 714H1922Q1923 708 1926 706ZM1851 721Q1854 723 1855 729H1847Q1848 723 1851 721Z" fill="#eee"/>
<g fill="#222" stroke="#333"><rect x="1943.500" y="672.500" width="28" height="12"/><rect x="1943.500" y="687.500" width="28" height="12"/><rect x="1943.500" y="702.500" width="28" height="12"/><rect x="1943.500" y="717.500" width="28" height="12"/></g>
<text x="1945" y="682" class="v">92</text><text x="1945" y="697" class="v">26</text><text x="1945" y="712" class="v">90</text><text x="1945" y="727" class="v">12</text>
<text x="1973" y="681" class="l">%</text><text x="1973" y="696" class="l">%</text><text x="1973" y="711" class="l">%</text><text x="1973" y="726" class="l">%</text>
<rect x="1798" y="730" width="183" height="66" fill="url(#rb)"/>
<rect x="1798" y="730" width="183" height="66" fill="url(#wb)"/>
<rect x="1981" y="730" width="7" height="34" fill="#fff"/><rect x="1981" y="764" width="7" height="32" fill="#000"/>

<!-- swatches -->
<rect x="1792" y="803" width="208" height="24" fill="#1f1f1f"/>
<rect x="1792" y="805" width="51" height="22" fill="#2a2a2a"/>
<text x="1799" y="819" class="b" textLength="37" lengthAdjust="spacingAndGlyphs">Swatches</text>
<path d="M1987 813H1995M1987 816H1995M1987 819H1995" stroke="#808080"/>
<rect x="1792" y="827" width="208" height="155" fill="#282828"/>
<circle cx="1801" cy="840" r="3" fill="none" stroke="#ddd" stroke-width="1.300"/><path d="M1803.500 842.500L1806 845" stroke="#ddd" stroke-width="1.500"/>
<rect x="1810.500" y="835.500" width="183" height="13" fill="#222" stroke="#333"/>
<text x="1812" y="846" style="fill:#555;font-size:10px" textLength="75" lengthAdjust="spacingAndGlyphs">Search Swatches</text>
<g>
<rect x="1798" y="856" width="13" height="13" fill="#f5f8fb"/><rect x="1812" y="856" width="13" height="13" fill="#0b6e3e"/><rect x="1826" y="856" width="13" height="13" fill="#1e5a2c"/><rect x="1840" y="856" width="13" height="13" fill="#8e7a64"/><rect x="1854" y="856" width="13" height="13" fill="#9e9e9e"/><rect x="1868" y="856" width="13" height="13" fill="#5f7485"/><rect x="1882" y="856" width="13" height="13" fill="#5c6563"/><rect x="1896" y="856" width="13" height="13" fill="#14405f"/><rect x="1910" y="856" width="13" height="13" fill="#000"/><rect x="1924" y="856" width="13" height="13" fill="#8e8375"/><rect x="1938" y="856" width="13" height="13" fill="#fff"/><rect x="1952" y="856" width="13" height="13" fill="#0b6e3e"/><rect x="1966" y="856" width="13" height="13" fill="#1e5a2c"/><rect x="1980" y="856" width="13" height="13" fill="#222"/>
</g>
<g>
<rect x="1794" y="877" width="12.500" height="12.500" fill="#ff0000"/><rect x="1808" y="877" width="12.500" height="12.500" fill="#ffff00"/><rect x="1822" y="877" width="12.500" height="12.500" fill="#00ff00"/><rect x="1836" y="877" width="12.500" height="12.500" fill="#00ffff"/><rect x="1850" y="877" width="12.500" height="12.500" fill="#0000ff"/><rect x="1864" y="877" width="12.500" height="12.500" fill="#ff00ff"/><rect x="1878" y="877" width="12.500" height="12.500" fill="#ffffff"/><rect x="1892" y="877" width="12.500" height="12.500" fill="#e6e6e6"/><rect x="1906" y="877" width="12.500" height="12.500" fill="#d9d9d9"/><rect x="1920" y="877" width="12.500" height="12.500" fill="#cccccc"/><rect x="1934" y="877" width="12.500" height="12.500" fill="#bfbfbf"/><rect x="1948" y="877" width="12.500" height="12.500" fill="#b3b3b3"/><rect x="1962" y="877" width="12.500" height="12.500" fill="#a6a6a6"/>
<rect x="1794" y="891" width="12.500" height="12.500" fill="#999999"/><rect x="1808" y="891" width="12.500" height="12.500" fill="#8c8c8c"/><rect x="1822" y="891" width="12.500" height="12.500" fill="#808080"/><rect x="1836" y="891" width="12.500" height="12.500" fill="#dd0e2a"/><rect x="1850" y="891" width="12.500" height="12.500" fill="#fff100"/><rect x="1864" y="891" width="12.500" height="12.500" fill="#009b48"/><rect x="1878" y="891" width="12.500" height="12.500" fill="#00a0e9"/><rect x="1892" y="891" width="12.500" height="12.500" fill="#1f2383"/><rect x="1906" y="891" width="12.500" height="12.500" fill="#e4007f"/><rect x="1920" y="891" width="12.500" height="12.500" fill="#737373"/><rect x="1934" y="891" width="12.500" height="12.500" fill="#666666"/><rect x="1948" y="891" width="12.500" height="12.500" fill="#595959"/><rect x="1962" y="891" width="12.500" height="12.500" fill="#4d4d4d"/>
<rect x="1794" y="905" width="12.500" height="12.500" fill="#404040"/><rect x="1808" y="905" width="12.500" height="12.500" fill="#333333"/><rect x="1822" y="905" width="12.500" height="12.500" fill="#262626"/><rect x="1836" y="905" width="12.500" height="12.500" fill="#1a1a1a"/><rect x="1850" y="905" width="12.500" height="12.500" fill="#0d0d0d"/><rect x="1864" y="905" width="12.500" height="12.500" fill="#000000"/><rect x="1878" y="905" width="12.500" height="12.500" fill="#f08468"/><rect x="1892" y="905" width="12.500" height="12.500" fill="#f5a070"/><rect x="1906" y="905" width="12.500" height="12.500" fill="#fbb979"/><rect x="1920" y="905" width="12.500" height="12.500" fill="#fff385"/><rect x="1934" y="905" width="12.500" height="12.500" fill="#bcdb8a"/><rect x="1948" y="905" width="12.500" height="12.500" fill="#9acc8b"/><rect x="1962" y="905" width="12.500" height="12.500" fill="#7fc88f"/>
<rect x="1794" y="919" width="12.500" height="12.500" fill="#6fc7c0"/><rect x="1808" y="919" width="12.500" height="12.500" fill="#5bc5f2"/><rect x="1822" y="919" width="12.500" height="12.500" fill="#6a9bd5"/><rect x="1836" y="919" width="12.500" height="12.500" fill="#6b7fc0"/><rect x="1850" y="919" width="12.500" height="12.500" fill="#7469b4"/><rect x="1864" y="919" width="12.500" height="12.500" fill="#8c6bb2"/><rect x="1878" y="919" width="12.500" height="12.500" fill="#a875b5"/><rect x="1892" y="919" width="12.500" height="12.500" fill="#ef85b5"/><rect x="1906" y="919" width="12.500" height="12.500" fill="#f0858e"/><rect x="1920" y="919" width="12.500" height="12.500" fill="#ee5a42"/><rect x="1934" y="919" width="12.500" height="12.500" fill="#f37a40"/><rect x="1948" y="919" width="12.500" height="12.500" fill="#f9a444"/><rect x="1962" y="919" width="12.500" height="12.500" fill="#fff04a"/>
<rect x="1794" y="933" width="12.500" height="12.500" fill="#a5d05a"/><rect x="1808" y="933" width="12.500" height="12.500" fill="#70bf5e"/><rect x="1822" y="933" width="12.500" height="12.500" fill="#3ab06b"/><rect x="1836" y="933" width="12.500" height="12.500" fill="#26b1a4"/><rect x="1850" y="933" width="12.500" height="12.500" fill="#00b0ee"/><rect x="1864" y="933" width="12.500" height="12.500" fill="#3a7fc8"/><rect x="1878" y="933" width="12.500" height="12.500" fill="#4464ae"/><rect x="1892" y="933" width="12.500" height="12.500" fill="#4f4ca0"/><rect x="1906" y="933" width="12.500" height="12.500" fill="#7048a0"/><rect x="1920" y="933" width="12.500" height="12.500" fill="#964da0"/><rect x="1934" y="933" width="12.500" height="12.500" fill="#ea5098"/><rect x="1948" y="933" width="12.500" height="12.500" fill="#ee5670"/><rect x="1962" y="933" width="12.500" height="12.500" fill="#e60021"/>
<rect x="1794" y="947" width="12.500" height="12.500" fill="#eb5418"/><rect x="1808" y="947" width="12.500" height="12.500" fill="#f38200"/><rect x="1822" y="947" width="12.500" height="12.500" fill="#fff000"/><rect x="1836" y="947" width="12.500" height="12.500" fill="#8fc31f"/><rect x="1850" y="947" width="12.500" height="12.500" fill="#39ab36"/><rect x="1864" y="947" width="12.500" height="12.500" fill="#009b4b"/><rect x="1878" y="947" width="12.500" height="12.500" fill="#009c8f"/><rect x="1892" y="947" width="12.500" height="12.500" fill="#00a0e9"/><rect x="1906" y="947" width="12.500" height="12.500" fill="#0068b7"/><rect x="1920" y="947" width="12.500" height="12.500" fill="#00479d"/><rect x="1934" y="947" width="12.500" height="12.500" fill="#1d2087"/><rect x="1948" y="947" width="12.500" height="12.500" fill="#601986"/><rect x="1962" y="947" width="12.500" height="12.500" fill="#920783"/>
<rect x="1794" y="961" width="12.500" height="12.500" fill="#e4007f"/><rect x="1808" y="961" width="12.500" height="12.500" fill="#e5004f"/><rect x="1822" y="961" width="12.500" height="12.500" fill="#8e000f"/><rect x="1836" y="961" width="12.500" height="12.500" fill="#8f2f0d"/><rect x="1850" y="961" width="12.500" height="12.500" fill="#8f5500"/><rect x="1864" y="961" width="12.500" height="12.500" fill="#9a8c00"/><rect x="1878" y="961" width="12.500" height="12.500" fill="#4e7215"/><rect x="1892" y="961" width="12.500" height="12.500" fill="#1f6b22"/><rect x="1906" y="961" width="12.500" height="12.500" fill="#006034"/><rect x="1920" y="961" width="12.500" height="12.500" fill="#005f62"/><rect x="1934" y="961" width="12.500" height="12.500" fill="#00699b"/><rect x="1948" y="961" width="12.500" height="12.500" fill="#00427d"/><rect x="1962" y="961" width="12.500" height="12.500" fill="#00296c"/>
<rect x="1794" y="975" width="12.500" height="7" fill="#1a1265"/><rect x="1808" y="975" width="12.500" height="7" fill="#3b0f64"/><rect x="1822" y="975" width="12.500" height="7" fill="#600c60"/><rect x="1836" y="975" width="12.500" height="7" fill="#90005f"/><rect x="1850" y="975" width="12.500" height="7" fill="#8f002c"/><rect x="1864" y="975" width="12.500" height="7" fill="#7c0000"/><rect x="1878" y="975" width="12.500" height="7" fill="#6a2300"/><rect x="1892" y="975" width="12.500" height="7" fill="#703c00"/><rect x="1906" y="975" width="12.500" height="7" fill="#7c6d00"/><rect x="1920" y="975" width="12.500" height="7" fill="#3a5610"/><rect x="1934" y="975" width="12.500" height="7" fill="#15531a"/><rect x="1948" y="975" width="12.500" height="7" fill="#00481f"/><rect x="1962" y="975" width="12.500" height="7" fill="#004f42"/>
</g>
<rect x="1988" y="878" width="8" height="28" rx="4" fill="#454545"/>

<!-- tool icons -->
<rect x="3" y="408" width="24" height="19" fill="#1b1b1b"/>
<g>
<path d="M15 24V38M8 31H22M12.500 27L15 24L17.500 27M12.500 35L15 38L17.500 35M11 28.500L8 31L11 33.500M19 28.500L22 31L19 33.500" class="i"/>
<rect x="9.500" y="45.500" width="12" height="10" class="i" stroke-dasharray="2.500 1.500"/>
<path d="M10 66Q16 63 22 65L19 74L14 68M10 66L16 76M13 73L20 78" class="i"/>
<path d="M9 98L18 89" stroke="#ddd" stroke-width="2.500"/><path d="M20 84V88M18 86H22M23 90V92M14 85V87M13 86H15" stroke="#ddd"/>
<path d="M12 105V117H24M8 109H20V121" style="fill:none;stroke:#c6c6c6;stroke-width:1.700"/>
<rect x="9.500" y="127" width="12" height="11" class="i"/><path d="M9.500 127L21.500 138M21.500 127L9.500 138" class="i"/>
<path d="M10 158L18 150M20 146L22 148L19 151L17 149ZM9 159L10 158" style="fill:none;stroke:#c6c6c6;stroke-width:1.800"/>
<rect x="10" y="168" width="11" height="10" stroke-dasharray="1.500 1" style="fill:none;stroke:#c6c6c6;stroke-width:1.600"/><rect x="12" y="170" width="7" height="6" fill="#ddd"/>
<path d="M22 187L15 195" stroke="#ddd" stroke-width="2.200"/><path d="M10 200Q10 195 14 194L16.500 196Q15 200 10 200Z" fill="#ddd"/>
<circle cx="16" cy="209" r="3" fill="#ddd"/><rect x="14.500" y="211" width="3" height="4" fill="#ddd"/><rect x="10.500" y="215" width="11" height="3" fill="#ddd"/><rect x="10" y="219.500" width="12" height="1.300" fill="#ddd"/>
<path d="M22 229L14 239" stroke="#ddd" stroke-width="2"/><path d="M9 233H15M11 237L15 230" class="i"/><path d="M9 241Q10 237 13 237L15 239Q13 241 9 241Z" fill="#ddd"/>
<path d="M11 254L17 249L22 252L18 258H11Z" fill="none" stroke="#ccc" stroke-width="1.300"/><path d="M9 259.500H21" class="i"/>
<rect x="9" y="269" width="13" height="12" fill="url(#gr)" stroke="#bbb"/>
<path d="M12 288Q14 284 20 287Q22 291 18 295L17 302L13 300L15 295Q10 293 12 288Z" fill="#ccc"/>
<ellipse cx="15" cy="315" rx="6" ry="4" fill="#ddd"/><path d="M18 316L22 319" stroke="#ddd" stroke-width="2"/><circle cx="15" cy="315" r="1.500" fill="#444"/>
<path d="M11 342L14 334L20 331L22 334L19 339L12 344" class="i"/><circle cx="17" cy="336" r="1" fill="#ccc"/>
<path d="M11 350H22M11 350V353M22 350V353M16.500 350V362M14 362H19" class="i"/>
<path d="M11 369V383L15 379L19 385V378H16Z" fill="#ddd" transform="translate(1 -2)"/>
<rect x="9.500" y="391" width="12" height="10" fill="#5f5f5f" stroke="#bcbcbc"/>
<path d="M11 418V414Q11 412 12.500 413L14 415V410.500Q15 409 15.500 410.500V414V409.500Q16.500 408.500 17 409.500V414V410Q18 409 18.500 410V414V412Q20 411 20 412.500V417Q20 423 16 423Q13 423 11 418Z" fill="#e8e8e8" transform="translate(-1 0)"/>
<circle cx="14" cy="435" r="4.500" class="i"/><path d="M17.500 438.500L21.500 442" stroke="#ccc" stroke-width="1.700"/>
<circle cx="11" cy="457" r="1.300" fill="#ccc"/><circle cx="15.500" cy="457" r="1.300" fill="#ccc"/><circle cx="20" cy="457" r="1.300" fill="#ccc"/>
<rect x="7" y="474" width="5" height="5" fill="#e0e0e0"/><rect x="5" y="472" width="5" height="5" fill="#111" stroke="#ccc"/><rect x="8" y="475" width="3.500" height="3.500" fill="#e0e0e0"/>
<path d="M18 474Q23 472 24.500 476M24.500 476L23 474.500" stroke="#ccc" fill="none" stroke-width="1.100"/><path d="M19 473V476" stroke="#ccc" fill="none"/>
<rect x="11" y="492" width="15" height="15" fill="#fff"/>
<rect x="4.500" y="485.500" width="13.500" height="13.500" fill="#0a7040" stroke="#e0e0e0"/>
<rect x="8.500" y="516.500" width="13" height="9" fill="#444" stroke="#999"/><circle cx="15" cy="521" r="3" fill="none" stroke="#bbb" stroke-dasharray="1.200 1"/>
<rect x="8.500" y="539.500" width="9" height="7" fill="none" stroke="#999"/><rect x="13" y="537" width="9" height="7" fill="#333" stroke="#ccc"/>
<g stroke="#777" fill="none"><path d="M22 34H24V36M22 53H24V55M22 74H24V76M22 94H24V96M22 114H24V116"/></g>
</g>
</svg>
</body></html>
